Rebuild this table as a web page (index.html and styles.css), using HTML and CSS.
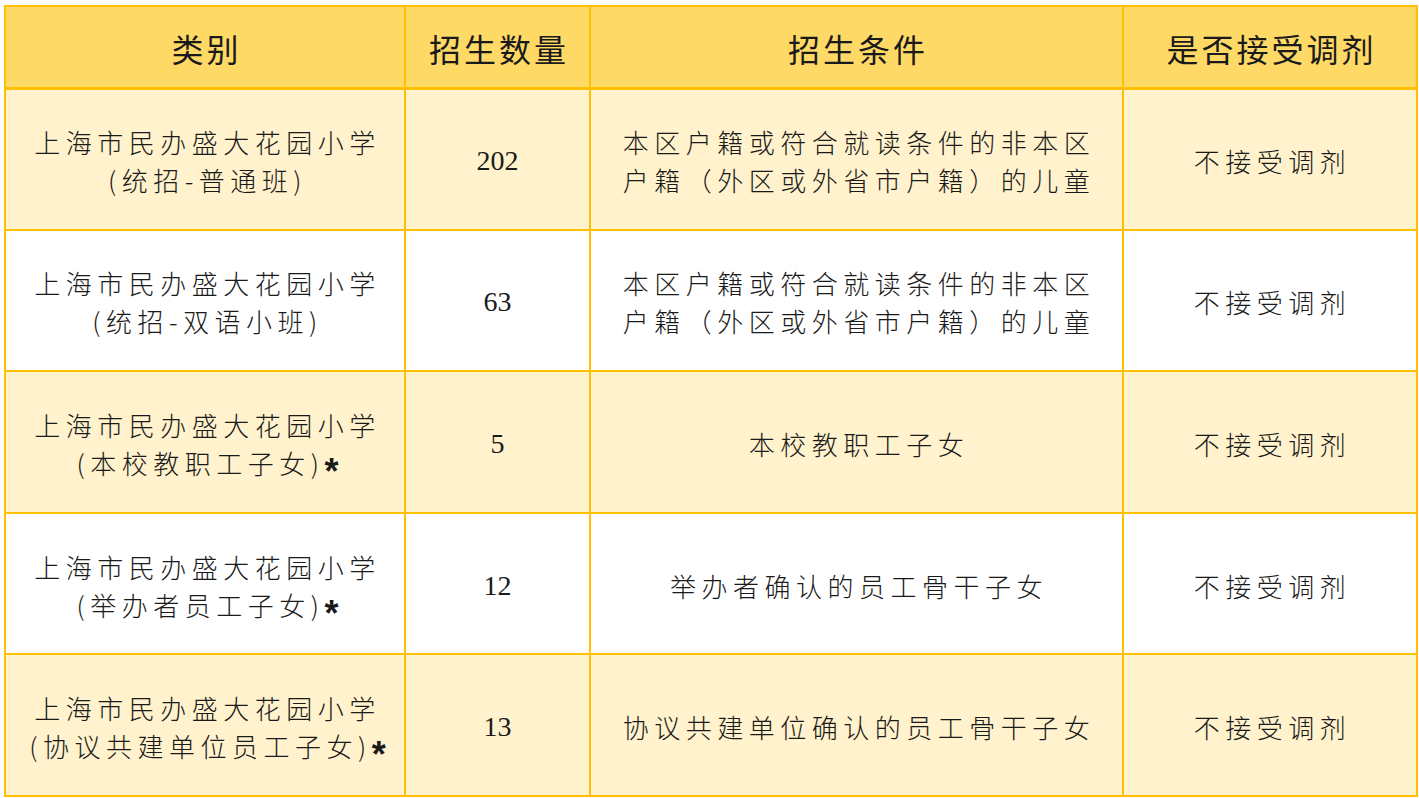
FILE: index.html
```html
<!DOCTYPE html>
<html lang="zh-CN">
<head>
<meta charset="utf-8">
<title>招生计划</title>
<link rel="stylesheet" href="styles.css">
</head>
<body>
<table class="plan">
  <colgroup>
    <col class="c1"><col class="c2"><col class="c3"><col class="c4">
  </colgroup>
  <thead>
    <tr class="head">
      <th>类别</th>
      <th>招生数量</th>
      <th>招生条件</th>
      <th>是否接受调剂</th>
    </tr>
  </thead>
  <tbody>
    <tr class="odd">
      <td>上海市民办盛大花园小学<br>(统招-普通班)</td>
      <td class="num">202</td>
      <td>本区户籍或符合就读条件的非本区<br>户籍（外区或外省市户籍）的儿童</td>
      <td>不接受调剂</td>
    </tr>
    <tr class="even">
      <td>上海市民办盛大花园小学<br>(统招-双语小班)</td>
      <td class="num">63</td>
      <td>本区户籍或符合就读条件的非本区<br>户籍（外区或外省市户籍）的儿童</td>
      <td>不接受调剂</td>
    </tr>
    <tr class="odd">
      <td>上海市民办盛大花园小学<br>(本校教职工子女)<span class="star">*</span></td>
      <td class="num">5</td>
      <td>本校教职工子女</td>
      <td>不接受调剂</td>
    </tr>
    <tr class="even">
      <td>上海市民办盛大花园小学<br>(举办者员工子女)<span class="star">*</span></td>
      <td class="num">12</td>
      <td>举办者确认的员工骨干子女</td>
      <td>不接受调剂</td>
    </tr>
    <tr class="odd">
      <td>上海市民办盛大花园小学<br>(协议共建单位员工子女)<span class="star">*</span></td>
      <td class="num">13</td>
      <td>协议共建单位确认的员工骨干子女</td>
      <td>不接受调剂</td>
    </tr>
  </tbody>
</table>
</body>
</html>
```

FILE: styles.css
```css
html, body {
  margin: 0;
  padding: 0;
  background: #ffffff;
}

.plan {
  margin: 5px 0 0 4px;
  border-collapse: collapse;
  table-layout: fixed;
  width: 1412px;
  border: 2px solid #FFC000;
  font-family: "Noto Sans CJK SC", "Noto Sans", sans-serif;
  color: #1a1a1a;
}

.c1 { width: 400px; }
.c2 { width: 185px; }
.c3 { width: 533px; }
.c4 { width: 294px; }

.plan th,
.plan td {
  border: 2px solid #FFC000;
  text-align: center;
  vertical-align: middle;
  padding: 0;
}

.head {
  height: 82px;
  background: #FFD966;
}

.plan th {
  font-size: 32px;
  font-weight: 400;
  letter-spacing: 3px;
  line-height: 40px;
  border-bottom-width: 3px;
  padding: 2px 0 0 3px;
}

.plan tbody tr {
  height: 141.6px;
}

.odd { background: #FFF2CC; }
.even { background: #ffffff; }

.plan td {
  font-size: 26px;
  font-weight: 300;
  letter-spacing: 5.5px;
  line-height: 38px;
  padding: 4px 0 0 5px;
}

.plan td.num {
  font-family: "Liberation Serif", "Times New Roman", serif;
  font-size: 28px;
  font-weight: 400;
  letter-spacing: 0;
  padding: 4px 0 0 0;
}

.star {
  font-family: "Liberation Sans", sans-serif;
  font-weight: 700;
  font-size: 36px;
  letter-spacing: 0;
  line-height: 20px;
  vertical-align: -10px;
}
```
